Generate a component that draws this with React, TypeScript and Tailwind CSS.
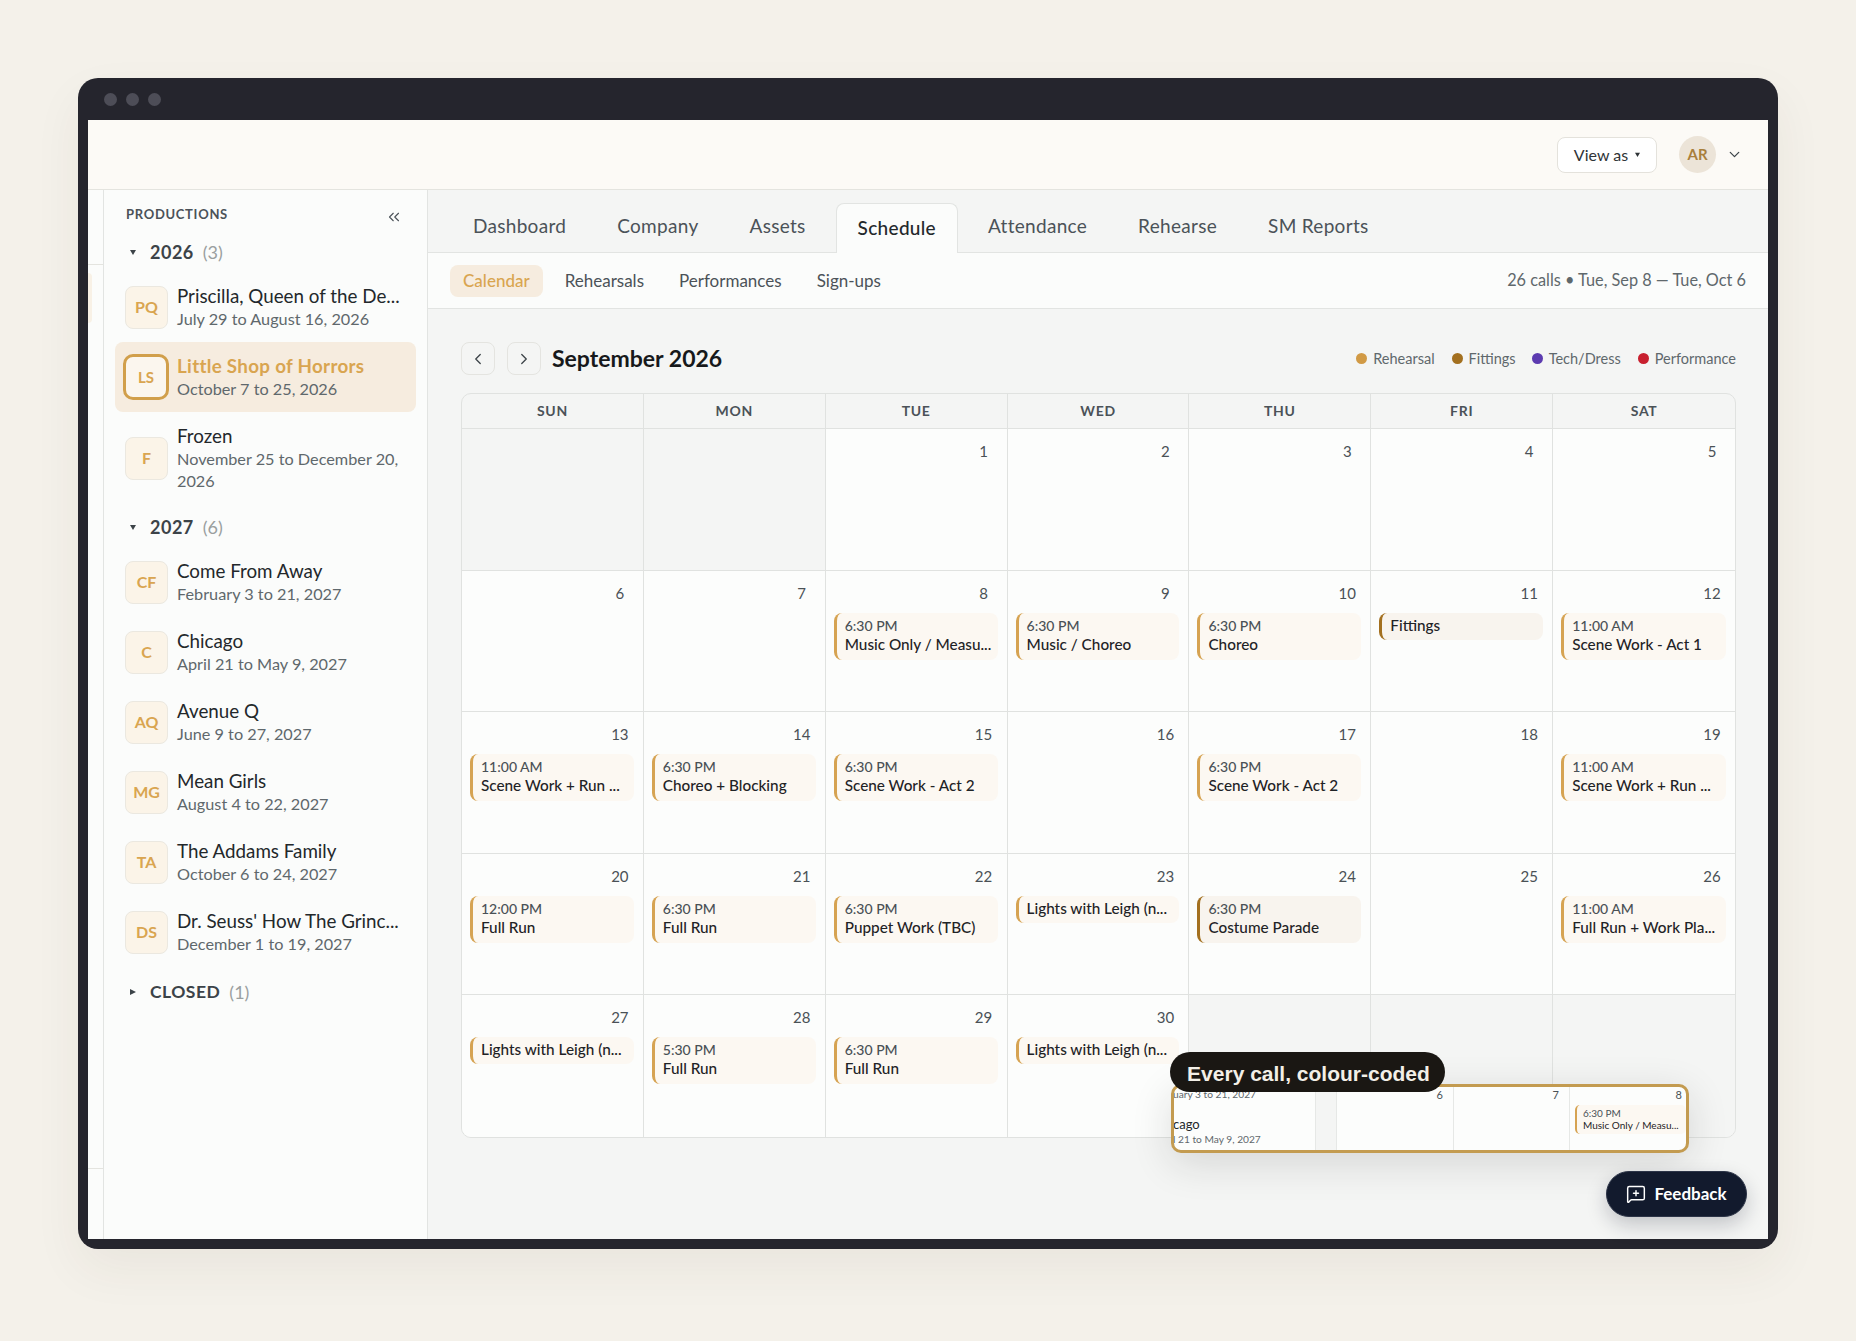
import React from "react";
import { ChevronDown, ChevronLeft, ChevronRight, ChevronsLeft, MessageSquarePlus } from "lucide-react";

type Production = { code: string; title: string; dates: string; active?: boolean };
type CalEvent = { time?: string; title: string; fit?: boolean };
type Day = { day?: number; event?: CalEvent };

const group2026: Production[] = [
  { code: "PQ", title: "Priscilla, Queen of the De...", dates: "July 29 to August 16, 2026" },
  { code: "LS", title: "Little Shop of Horrors", dates: "October 7 to 25, 2026", active: true },
  { code: "F", title: "Frozen", dates: "November 25 to December 20, 2026" },
];

const group2027: Production[] = [
  { code: "CF", title: "Come From Away", dates: "February 3 to 21, 2027" },
  { code: "C", title: "Chicago", dates: "April 21 to May 9, 2027" },
  { code: "AQ", title: "Avenue Q", dates: "June 9 to 27, 2027" },
  { code: "MG", title: "Mean Girls", dates: "August 4 to 22, 2027" },
  { code: "TA", title: "The Addams Family", dates: "October 6 to 24, 2027" },
  { code: "DS", title: "Dr. Seuss' How The Grinc...", dates: "December 1 to 19, 2027" },
];

const days: Day[] = [
  {},
  {},
  { day: 1 },
  { day: 2 },
  { day: 3 },
  { day: 4 },
  { day: 5 },
  { day: 6 },
  { day: 7 },
  { day: 8, event: { time: "6:30 PM", title: "Music Only / Measu..." } },
  { day: 9, event: { time: "6:30 PM", title: "Music / Choreo" } },
  { day: 10, event: { time: "6:30 PM", title: "Choreo" } },
  { day: 11, event: { title: "Fittings", fit: true } },
  { day: 12, event: { time: "11:00 AM", title: "Scene Work - Act 1" } },
  { day: 13, event: { time: "11:00 AM", title: "Scene Work + Run ..." } },
  { day: 14, event: { time: "6:30 PM", title: "Choreo + Blocking" } },
  { day: 15, event: { time: "6:30 PM", title: "Scene Work - Act 2" } },
  { day: 16 },
  { day: 17, event: { time: "6:30 PM", title: "Scene Work - Act 2" } },
  { day: 18 },
  { day: 19, event: { time: "11:00 AM", title: "Scene Work + Run ..." } },
  { day: 20, event: { time: "12:00 PM", title: "Full Run" } },
  { day: 21, event: { time: "6:30 PM", title: "Full Run" } },
  { day: 22, event: { time: "6:30 PM", title: "Puppet Work (TBC)" } },
  { day: 23, event: { title: "Lights with Leigh (n..." } },
  { day: 24, event: { time: "6:30 PM", title: "Costume Parade", fit: true } },
  { day: 25 },
  { day: 26, event: { time: "11:00 AM", title: "Full Run + Work Pla..." } },
  { day: 27, event: { title: "Lights with Leigh (n..." } },
  { day: 28, event: { time: "5:30 PM", title: "Full Run" } },
  { day: 29, event: { time: "6:30 PM", title: "Full Run" } },
  { day: 30, event: { title: "Lights with Leigh (n..." } },
  {},
  {},
  {},
];

const Caret = ({ open }: { open: boolean }) => (
  <svg width="6" height="6" viewBox="0 0 6 6" className="text-[#3c4348]">
    {open ? <polygon points="0,1 6,1 3,6" fill="currentColor" /> : <polygon points="0,0 6,3 0,6" fill="currentColor" />}
  </svg>
);

const GroupHeader = ({ label, count, open, className }: { label: string; count: number; open: boolean; className: string }) => (
  <div className={`flex h-10 items-center pl-[15px] ${className}`}>
    <Caret open={open} />
    <span className={`ml-[14px] font-bold tracking-[0.5px] text-[#3c4348] ${open ? "text-[18px]" : "text-[17.5px]"}`}>{label}</span>
    <span className="ml-[9px] text-[18px] text-[#9a9f9f]">({count})</span>
  </div>
);

const ProductionRow = ({ item }: { item: Production }) => (
  <div className={`flex items-center rounded-lg py-3 pl-[10px] pr-2 ${item.active ? "bg-[#f6ecdf]" : ""}`}>
    {item.active ? (
      <div className="-mx-[2px] flex h-[46px] w-[46px] shrink-0 items-center justify-center rounded-[10px] border-[3px] border-[#d19f4b] bg-[#fbf6ee] text-[15px] font-bold text-[#d9a550]">
        {item.code}
      </div>
    ) : (
      <div className="flex h-[43px] w-[43px] shrink-0 items-center justify-center rounded-lg border border-[#ebe8e0] bg-[#fbf4e8] text-[16px] font-bold text-[#d9a550]">
        {item.code}
      </div>
    )}
    <div className={`min-w-0 ${item.active ? "ml-[10px]" : "ml-[9px]"}`}>
      <div
        className={`whitespace-nowrap text-[18.8px] leading-6 ${
          item.active ? "font-bold tracking-[0.3px] text-[#d9a550]" : "text-[#23282b]"
        }`}
      >
        {item.title}
      </div>
      <div className="text-[16.25px] leading-[22px] text-[#5f686c]">{item.dates}</div>
    </div>
  </div>
);

const EventCard = ({ event }: { event: CalEvent }) => (
  <div
    className={`ml-[8px] mr-[9px] rounded-[8px] border-l-[3px] pl-[8px] ${event.fit ? "bg-[#f8f4ee]" : "bg-[#fcf8f2]"} ${
      event.fit ? "border-[#a3701f]" : "border-[#d6a352]"
    } ${event.time ? "pb-[6px] pt-[3px]" : "pb-[5px] pt-[3px]"}`}
  >
    {event.time && <div className="text-[14px] font-medium leading-[19px] text-[#4a5156]">{event.time}</div>}
    <div className="whitespace-nowrap text-[15.3px] font-medium leading-[19px] text-[#1f2326]">{event.title}</div>
  </div>
);

const App = () => {
  return (
    <div className="h-[1341px] w-[1856px] bg-[#f4f1ea] pl-[78px] pt-[78px] font-['Lato',sans-serif]">
      <div className="relative flex h-[1171px] w-[1700px] flex-col rounded-[20px] bg-[#25252d] px-[10px] pb-[10px] shadow-[0_20px_50px_rgba(60,50,30,0.06)]">
        <div className="flex h-[42px] shrink-0 items-center gap-[9px] pl-[16px]">
          <span className="h-[13px] w-[13px] rounded-full bg-[#4d4d57]"></span>
          <span className="h-[13px] w-[13px] rounded-full bg-[#4d4d57]"></span>
          <span className="h-[13px] w-[13px] rounded-full bg-[#4d4d57]"></span>
        </div>

        <div className="flex h-[70px] shrink-0 items-center justify-end border-b border-[#e4e4df] bg-[#fcfaf6] pr-[25px]">
          <button className="flex h-9 w-[100px] items-center justify-center gap-[7px] rounded-lg border border-[#e4e2dc] bg-white text-[16px] text-[#2f3437]">
            View as
            <svg width="5" height="5" viewBox="0 0 6 6">
              <polygon points="0,1 6,1 3,6" fill="#2f3437" />
            </svg>
          </button>
          <div className="ml-[22px] flex h-[37px] w-[37px] items-center justify-center rounded-full bg-[#ece4d8] text-[15px] font-bold text-[#a97f3c]">
            AR
          </div>
          <ChevronDown size={17} strokeWidth={1.75} className="ml-[10px] text-[#3c4348]" />
        </div>

        <div className="flex min-h-0 flex-1">
          <div className="flex w-[16px] shrink-0 flex-col border-r border-[#e2e4e2] bg-[#fbfcfb]">
            <div className="h-[75px] border-b border-[#e4e4df]"></div>
            <div className="mt-2 h-[50px] w-1 rounded-r bg-[#f8f1e6]"></div>
            <div className="mt-auto h-[71px] border-t border-[#e4e4df]"></div>
          </div>

          <aside className="w-[324px] shrink-0 border-r border-[#e2e4e2] bg-[#fbfcfb] pl-[11px] pr-[11px]">
            <div className="flex h-[42px] items-end justify-between pb-[8px] pl-[11px] pr-[13px]">
              <span className="text-[13px] font-bold tracking-[0.7px] text-[#4b5258]">PRODUCTIONS</span>
              <ChevronsLeft size={18} strokeWidth={1.5} className="-mb-[2px] text-[#4b5258]" />
            </div>
            <GroupHeader label="2026" count={3} open className="" />
            {group2026.map((item) => (
              <ProductionRow key={item.code} item={item} />
            ))}
            <GroupHeader label="2027" count={6} open className="mt-[3px]" />
            {group2027.map((item) => (
              <ProductionRow key={item.code} item={item} />
            ))}
            <GroupHeader label="CLOSED" count={1} open={false} className="mt-[5px]" />
          </aside>

          <main className="min-w-0 flex-1 bg-[#f4f5f4]">
            <div className="flex h-[63px] items-end gap-[9px] border-b border-[#e2e4e2] pl-6">
              {["Dashboard", "Company", "Assets", "Schedule", "Attendance", "Rehearse", "SM Reports"].map((tab) =>
                tab === "Schedule" ? (
                  <div
                    key={tab}
                    className="-mb-px flex h-[50px] items-center rounded-t-lg border border-b-0 border-[#e2e4e2] bg-[#fbfcfb] px-[21px] pb-[1px] text-[19px] font-medium tracking-[0.3px] text-[#23282b]"
                  >
                    {tab}
                  </div>
                ) : (
                  <div key={tab} className="flex h-[50px] items-center px-[21px] pb-[2px] text-[19px] tracking-[0.3px] text-[#4b5258]">
                    {tab}
                  </div>
                )
              )}
            </div>

            <div className="flex h-[56px] items-center justify-between border-b border-[#e2e4e2] bg-[#fbfcfb] px-[22px]">
              <div className="flex items-center gap-[9px]">
                <div className="flex h-8 items-center rounded-lg bg-[#f6ecdf] px-[13px] text-[17px] font-medium text-[#d9a550]">
                  Calendar
                </div>
                {["Rehearsals", "Performances", "Sign-ups"].map((item) => (
                  <div key={item} className="px-[13px] text-[17px] text-[#4b5258]">
                    {item}
                  </div>
                ))}
              </div>
              <div className="text-[16.3px] text-[#5f686c]">26 calls • Tue, Sep 8 — Tue, Oct 6</div>
            </div>

            <div className="pl-[33px] pr-[32px] pt-[33px]">
              <div className="mb-[18px] flex h-[33px] items-center">
                <button className="flex h-[33px] w-[34px] items-center justify-center rounded-lg border border-[#e4e4e0] text-[#3c4348]">
                  <ChevronLeft size={18} strokeWidth={1.75} />
                </button>
                <button className="ml-3 flex h-[33px] w-[34px] items-center justify-center rounded-lg border border-[#e4e4e0] text-[#3c4348]">
                  <ChevronRight size={18} strokeWidth={1.75} />
                </button>
                <h1 className="ml-[11px] text-[23px] font-bold text-[#17191b]">September 2026</h1>
                <div className="ml-auto flex items-center text-[14.5px] text-[#5f686c]">
                  <span className="h-[11px] w-[11px] rounded-full bg-[#d19a45]"></span>
                  <span className="ml-[6px]">Rehearsal</span>
                  <span className="ml-[17px] h-[11px] w-[11px] rounded-full bg-[#a3701f]"></span>
                  <span className="ml-[6px]">Fittings</span>
                  <span className="ml-[16px] h-[11px] w-[11px] rounded-full bg-[#5c3bb0]"></span>
                  <span className="ml-[6px]">Tech/Dress</span>
                  <span className="ml-[17px] h-[11px] w-[11px] rounded-full bg-[#c8202f]"></span>
                  <span className="ml-[6px]">Performance</span>
                </div>
              </div>

              <div className="overflow-hidden rounded-[10px] border border-[#e0e2e0]">
                <div className="grid h-[35px] grid-cols-7 border-b border-[#e0e2e0]">
                  {["SUN", "MON", "TUE", "WED", "THU", "FRI", "SAT"].map((name) => (
                    <div
                      key={name}
                      className="flex items-center justify-center border-r border-[#e0e2e0] pb-px text-[14px] font-bold tracking-[0.7px] text-[#4b5258] last:border-r-0"
                    >
                      {name}
                    </div>
                  ))}
                </div>
                <div className="grid h-[708px] grid-cols-7 grid-rows-5">
                  {days.map((cell, i) => (
                    <div
                      key={i}
                      className={`border-b border-r border-[#e0e2e0] [&:nth-child(7n)]:border-r-0 [&:nth-last-child(-n+7)]:border-b-0 ${
                        cell.day ? "bg-[#fcfdfc]" : "bg-[#f4f5f4]"
                      }`}
                    >
                      {cell.day && (
                        <div className="mb-[10px] flex justify-end pr-[11px] pt-[12px] text-[15px] leading-5 text-[#4a5156]">
                          <span className="w-6 text-center">{cell.day}</span>
                        </div>
                      )}
                      {cell.event && <EventCard event={cell.event} />}
                    </div>
                  ))}
                </div>
              </div>
            </div>
          </main>
        </div>

        {/* zoomed snippet that sits over the calendar */}
        <div className="absolute left-[1093px] top-[1006px] flex h-[69px] w-[518px] overflow-hidden rounded-[10px] border-[3px] border-[#c39b50] bg-[#fcfdfc] shadow-[0_10px_40px_rgba(30,30,30,0.14)]">
          <div className="w-[141px] shrink-0 whitespace-nowrap text-[10.2px] text-[#5f686c]">
            <div className="-ml-px mt-[-1px] leading-4">uary 3 to 21, 2027</div>
            <div className="-ml-[1px] mt-[14px] text-[13px] leading-4 text-[#23282b]">cago</div>
            <div className="-ml-[1px] leading-[14px]">l 21 to May 9, 2027</div>
          </div>
          <div className="w-[22px] shrink-0 border-x border-[#e6e8e6] bg-[#f4f5f4]"></div>
          <div className="w-[117px] shrink-0 border-r border-[#e6e8e6] pr-[10px] text-right text-[11px] leading-4 text-[#4a5156]">6</div>
          <div className="w-[116px] shrink-0 border-r border-[#e6e8e6] pr-[10px] text-right text-[11px] leading-4 text-[#4a5156]">7</div>
          <div className="min-w-0 flex-1 pl-[5px]">
            <div className="pr-[4px] text-right text-[11px] leading-4 text-[#4a5156]">8</div>
            <div className="mt-[2px] rounded-[5px] border-l-2 border-[#d6a352] bg-[#fcf8f2] py-[2px] pl-[6px]">
              <div className="text-[10px] leading-[12px] text-[#4a5156]">6:30 PM</div>
              <div className="whitespace-nowrap text-[10px] leading-[13px] text-[#1f2326]">Music Only / Measu...</div>
            </div>
          </div>
        </div>

        <div className="absolute left-[1092px] top-[974px] flex h-10 w-[275px] items-center justify-center rounded-[20px] bg-[#1a1713] pl-[2px] pt-[3px] font-['Liberation_Sans',sans-serif] text-[21px] font-bold text-[#f3efe7]">
          Every call, colour-coded
        </div>

        <button className="absolute bottom-[32px] right-[31px] flex h-[46px] w-[141px] items-center justify-center gap-2 rounded-full border border-[#2c3447] bg-[#121a2d] text-[17px] font-bold text-white shadow-[0_8px_20px_rgba(20,25,40,0.22)]">
          <MessageSquarePlus size={20} strokeWidth={1.75} />
          Feedback
        </button>
      </div>
    </div>
  );
};

export default App;
